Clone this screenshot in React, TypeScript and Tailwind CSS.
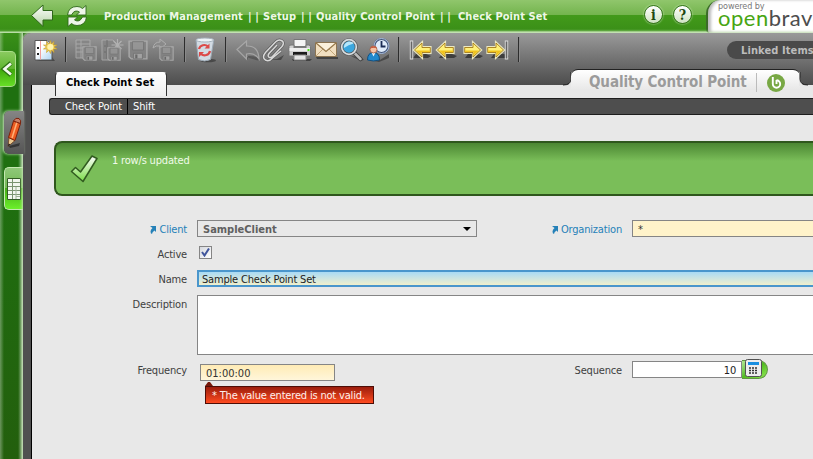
import type { ReactNode } from 'react';
import clsx from 'clsx';

function Icon({ children, dim = false }: { children: ReactNode; dim?: boolean }) {
  return (
    <svg width="26" height="26" viewBox="0 0 26 26" fill="none" className={clsx('shrink-0', dim && 'opacity-80')}>
      {children}
    </svg>
  );
}

function Separator({ className = '' }: { className?: string }) {
  return (
    <div className={clsx('w-4 shrink-0 pl-[7px]', className)}>
      <div className="h-[25px] w-[2px] border-l border-r border-l-[#2d2d2d] border-r-[#8a8a8a]" />
    </div>
  );
}

function Floppy({ x = 0, y = 0, size = 18 }: { x?: number; y?: number; size?: number }) {
  return (
    <svg x={x} y={y} width={size} height={size} viewBox="0 0 18 18">
      <path d="M1 1h16v16H3l-2-2z" fill="#858585" stroke="#b4b4b4" strokeWidth="1.300" />
      <path d="M4 1.500h10v7.500H4z" fill="#999" stroke="#6f6f6f" strokeWidth=".7" />
      <path d="M5 12h8v5H5z" fill="#adadad" stroke="#6f6f6f" strokeWidth=".7" />
      <path d="M6.500 13h2v3.500h-2z" fill="#666" />
    </svg>
  );
}

function NewIcon() {
  return (
    <Icon>
      <path d="M4 24h19l-3-4z" fill="#222" opacity=".5" />
      <path d="M3 3.500h12l5 5V23H3z" fill="url(#page)" stroke="#555" />
      <path d="M8.500 4v18.500" stroke="#f0a0a0" />
      <path d="M15 3.500V8h4" fill="#d7dce4" stroke="#666" strokeWidth=".8" />
      <path d="M5 10h2v2H5zM5 16h2v2H5z" fill="#222" />
      <path
        d="M18.500 3.500l1 3.500 2.500-2.500-.5 3.500 3.500 0-3 2 3 2-3.500 0 .5 3.500-2.500-2.500-1 3.500-1.500-3.300-2.500 2.300.5-3.500-3.500 0 3-2-3-2 3.500 0-.5-3.500 2.500 2.500z"
        fill="#f3d35c"
        stroke="#c79b25"
        strokeWidth=".6"
      />
      <circle cx="18.300" cy="10" r="3" fill="#fff3b0" />
      <defs>
        <linearGradient id="page" x1="0" y1="0" x2="1" y2="1">
          <stop offset=".4" stopColor="#fff" />
          <stop offset="1" stopColor="#a8d2f4" />
        </linearGradient>
      </defs>
    </Icon>
  );
}

function RecycleBinIcon() {
  return (
    <Icon>
      <ellipse cx="15" cy="23.500" rx="8" ry="1.800" fill="#222" opacity=".5" />
      <path d="M3 3l2.500 19.500Q11.500 25.500 17.500 22.500L20.800 3z" fill="#d2dbe3" stroke="#9aa7b3" />
      <ellipse cx="11.900" cy="3" rx="8.900" ry="2" fill="#eef3f7" stroke="#a5b1bb" />
      <path d="M6 12a5.500 5.500 0 0 1 9-2.500M17 14a5.500 5.500 0 0 1-9 3" stroke="#dc4a48" strokeWidth="2.200" />
      <path d="M16.500 6.500v5h-5zM6 20v-5h5z" fill="#dc4a48" />
    </Icon>
  );
}

function UndoIcon() {
  return (
    <Icon dim>
      <path d="M6 16l7 7v-4q8-.5 11 3l-1 1.500-9-2.500z" fill="#3c3c3c" opacity=".6" />
      <path d="M2 12.500l9.500-8.500v5q12-.5 12.500 13-4-6.500-12.500-5v5z" fill="#7f7f7f" stroke="#b0b0b0" strokeWidth="1.200" />
    </Icon>
  );
}

function ClipIcon() {
  return (
    <Icon>
      <path d="M7 23l9-1 7-4-3 5z" fill="#222" opacity=".5" />
      <path
        d="M16 8l-8 8.500q-2 3 .5 4 2 .5 3.500-1.500l9-9.500q3-4-.5-6-3-1.500-6 1.500l-10 10.500q-4 5 0 7.500 3.500 2 7-2L20 14"
        stroke="#5c5c5c"
        strokeWidth="2.800"
      />
      <path
        d="M16 8l-8 8.500q-2 3 .5 4 2 .5 3.500-1.500l9-9.500q3-4-.5-6-3-1.500-6 1.500l-10 10.500q-4 5 0 7.500 3.500 2 7-2L20 14"
        stroke="#d8d8d8"
        strokeWidth="1.500"
      />
    </Icon>
  );
}

function PrinterIcon() {
  return (
    <Icon>
      <path d="M5 22h20l-2 2H6z" fill="#222" opacity=".6" />
      <path d="M7 2.500h12v7H7z" fill="#f4f4f4" stroke="#777" />
      <path d="M2 9.500Q2 8 4 8h3v3h12V8h2.500q2 0 2 1.500V19H2z" fill="#cfcfcf" stroke="#777" />
      <path d="M2.500 11H23v3H2.500z" fill="#ededed" />
      <path d="M6 15h14v3H6z" fill="#1b1b1b" />
      <path d="M7 18h12v5H7z" fill="#e4e4e4" stroke="#888" />
      <path d="M20.500 12h2v2h-2z" fill="#4fe01c" />
    </Icon>
  );
}

function MailIcon() {
  return (
    <Icon>
      <path d="M3 20h22v2H4z" fill="#222" opacity=".6" />
      <path d="M2.500 5.500h21v14h-21z" fill="#f1dfc0" stroke="#8b7452" />
      <path d="M3 19l7.500-7.500M23 19l-7.500-7.500" stroke="#c1a67a" />
      <path d="M3 6l10 8.500L23 6" fill="#fbf1dc" stroke="#96784a" strokeWidth="1.200" />
    </Icon>
  );
}

function SearchIcon() {
  return (
    <Icon>
      <path d="M12 19q8 5 13 4l-3-3z" fill="#222" opacity=".5" />
      <path d="M15 15.500l6.500 6.500" stroke="#444" strokeWidth="4.500" strokeLinecap="round" />
      <path d="M15.500 16l6 6" stroke="#b8b8b8" strokeWidth="2.500" strokeLinecap="round" />
      <circle cx="10" cy="10" r="7.300" fill="#3ba7df" stroke="#555" strokeWidth="3" />
      <circle cx="10" cy="10" r="7.300" stroke="#d7dde0" strokeWidth="1.700" />
      <path d="M5 9q1-4 5-4.500 4 0 4.500 2-5 1-9.500 4.500z" fill="#b6e6fa" />
    </Icon>
  );
}

function UserClockIcon() {
  return (
    <Icon>
      <path d="M5 23h10l9-6v4l-10 4z" fill="#222" opacity=".5" />
      <circle cx="16.500" cy="9" r="7" fill="#e0ecfa" stroke="#44577b" strokeWidth="2" />
      <circle cx="16.500" cy="9" r="7.500" stroke="#b9cbe5" strokeWidth=".9" />
      <path d="M16.500 4v5.500h4" stroke="#1b2c55" strokeWidth="1.800" />
      <path d="M2.500 23q0-7.500 6-7.500t6 7.500q-6 2-12 0z" fill="#2188cc" stroke="#14507f" />
      <path d="M6.500 15.500h4l-2 4z" fill="#e8f4fc" />
      <circle cx="8.500" cy="12.500" r="3.500" fill="#f5c2a4" stroke="#a3583c" strokeWidth=".8" />
      <path d="M5 11.500q3.500-4.500 7 0-3-1.500-7 0z" fill="#c4553a" />
    </Icon>
  );
}

function ArrowIcon({ flip = false, bar = false }: { flip?: boolean; bar?: boolean }) {
  return (
    <Icon>
      <path d="M6 21h15l3-2-5-2H9z" fill="#1f1f1f" opacity=".65" />
      <g transform={flip ? 'translate(26 0) scale(-1 1)' : undefined}>
        {bar && <path d="M4.500 3.500v19" stroke="#dcdcdc" strokeWidth="3.400" />}
        {bar && <path d="M4.500 4.500v17" stroke="#656565" strokeWidth="1.600" />}
        <g transform={bar ? 'translate(3 0)' : undefined}>
          <path d="M4 13l8-7.500V10h8.500v6H12v4.500z" fill="#fff6a8" stroke="#ece9c2" strokeWidth="2.200" />
          <path d="M4.500 13L12 6v4.500h8.300v5H12V20z" fill="#fff17a" stroke="#a57916" strokeWidth=".9" />
          <path d="M6 13.500h14v1.500h-8.500v3.500z" fill="#f2c31c" />
        </g>
      </g>
    </Icon>
  );
}

function Toolbar() {
  return (
    <div className="flex h-9 pt-[4px] pl-[9px]">
      <NewIcon />
      <Separator className="-mr-px" />
      <Icon dim>
        <path d="M3 3h14v18H3zM3 7h14M3 11h14M3 15h14M8 3v18" fill="#858585" stroke="#b0b0b0" />
        <Floppy x={9} y={9} size={15} />
      </Icon>
      <Icon dim>
        <path d="M3 3h11l4 4v16H3z" fill="#858585" stroke="#b0b0b0" />
        <path d="M8 3v19M5 9h2M5 15h2" stroke="#666" />
        <path d="M18.500 2v12M12.500 8h12M14.500 4l8 8M22.500 4l-8 8" stroke="#bbb" strokeWidth="1.200" />
        <Floppy x={8} y={10} size={14} />
      </Icon>
      <Icon dim>
        <Floppy x={3} y={3} size={20} />
      </Icon>
      <Icon dim>
        <path d="M2 11q1-6 7-6V2l6 5-6 5V9q-4-1-7 2z" fill="#8b8b8b" stroke="#b8b8b8" />
        <Floppy x={8} y={9} size={15} />
      </Icon>
      <Separator />
      <RecycleBinIcon />
      <Separator className="-ml-px -mr-px" />
      <div className="w-[2px]" />
      <UndoIcon />
      <ClipIcon />
      <PrinterIcon />
      <MailIcon />
      <SearchIcon />
      <UserClockIcon />
      <Separator />
      <ArrowIcon bar />
      <ArrowIcon />
      <ArrowIcon flip />
      <ArrowIcon flip bar />
      <Separator />
      <div className="mt-[4px] ml-auto h-[18px] w-[86px] rounded-l-full bg-[#4a4a4a] pl-[14px] text-[11px] leading-[20px] font-bold tracking-[0.1px] whitespace-nowrap text-[#bcbcbc]">
        Linked Items
      </div>
    </div>
  );
}

function RoundBadge({ label }: { label: string }) {
  return (
    <div className="flex size-[19px] items-center justify-center rounded-full border border-[#35751b] bg-linear-to-b from-white to-[#cfe3c3] font-['DejaVu_Serif'] text-[14px] leading-none font-bold text-[#20480f] shadow-[0_0_2px_#d9f0cb]">
      {label}
    </div>
  );
}

function Header() {
  return (
    <header className="flex h-[33px] shrink-0 items-center bg-[linear-gradient(#90c66c_0px,#73b44d_15px,#429a1a_15px,#3b9018_29px,#51a02f_31px,#b9dda6_32px)]">
      <svg width="24" height="24" viewBox="0 0 24 24" className="ml-[30px] shrink-0 -translate-y-px">
        <path d="M1.500 11.500L13 1v5.500h9.500V16H13v6.500z" fill="url(#silver)" stroke="#2e661a" />
        <defs>
          <linearGradient id="silver" x2="0" y2="1">
            <stop stopColor="#fff" />
            <stop offset="1" stopColor="#b5d3a5" />
          </linearGradient>
        </defs>
      </svg>
      <svg width="22" height="22" viewBox="0 0 22 22" fill="none" className="ml-3 shrink-0 -translate-y-px">
        <path
          d="M1.500 10Q2.500 1.500 11 1.500q3.500 0 5.500 2l3.500-3V10h-9.500l3-3q-5-3-8 3zM20.500 12q-1 8.500-9.500 8.500-3.500 0-5.500-2L2 21.500V12h9.500l-3 3q5 3 8-3z"
          fill="#eef6e9"
          stroke="#2e661a"
          strokeWidth=".9"
        />
      </svg>
      <nav className="ml-4 flex pt-[2px] text-[11px] font-bold tracking-[0.08px] whitespace-pre text-[#eef7e6]">
        <span className="w-[144px]">Production Management</span>
        <span className="w-[15px]">| |</span>
        <span className="w-[38px]">Setup</span>
        <span className="w-[15px]">| |</span>
        <span className="w-[124px]">Quality Control Point</span>
        <span className="w-[18px]">| |</span>
        <span>Check Point Set</span>
      </nav>
      <div className="ml-auto flex gap-[10px] pb-[4px]">
        <RoundBadge label="i" />
        <RoundBadge label="?" />
      </div>
      <div className="ml-[14px] h-[33px] w-[107px] shrink-0 overflow-hidden rounded-bl-[4px] rounded-tl-[14px] border-l-2 border-[#3c6b28] bg-white pl-[10px] whitespace-nowrap shadow-[inset_3px_0_3px_#bbb]">
        <p className="h-[11px] text-[9px] leading-[13px] tracking-[-0.1px] text-[#777]">powered by</p>
        <p className="-mt-[2px] font-['Lato'] text-[22px] leading-[18px] tracking-[0.5px] text-[#4d4d4d]">
          <span className="text-[#48a512]">open</span>bravo
        </p>
      </div>
    </header>
  );
}

function SideNav() {
  return (
    <aside className="w-[23px] shrink-0 bg-[linear-gradient(90deg,#ffffff55_0px,transparent_4px,transparent_18px,#ffffff55_21px,#ffffffaa_23px),linear-gradient(#3a9018,#1f7010_50px,#1f7010_150px,#235f0d)]">
      <div className="mt-[18px] flex h-[36px] w-4 items-center rounded-r-[5px] border border-l-0 border-[#a9dd88] bg-[linear-gradient(#8aca60,#5db52d_50%,#3fa60b_50%,#67df27)]">
        <svg width="14" height="16" viewBox="0 0 14 16" fill="none">
          <path d="M11 2L4 8l7 6" stroke="#2d7113" strokeWidth="4.500" />
          <path d="M11 2.500L4.500 8l6.500 5.500" stroke="#f3faee" strokeWidth="2.700" />
        </svg>
      </div>
      <div className="relative mt-[24px] ml-[4px] flex h-[43px] w-[20px] items-center rounded-l-[5px] bg-linear-to-b from-[#858585] to-[#555] shadow-[-1px_0_3px_#d8edcc]">
        <svg width="18" height="34" viewBox="0 0 18 34">
          <path d="M5 30l11-3-1 3-9 2z" fill="#222" opacity=".7" />
          <path d="M4 30.500l1-9 6 3z" fill="#edc990" stroke="#6d4322" strokeWidth=".8" />
          <path d="M4 30.500l.5-3 2 1z" fill="#222" />
          <path d="M4.500 21.500L9.500 5l7 2.500-5.500 17z" fill="#ed5c22" stroke="#7b210a" />
          <path d="M8 22l5-16" stroke="#ffb076" strokeWidth="1.500" />
          <path d="M9.500 5q2-4 5.500-2.500 2.500 2 1.500 5z" fill="#c87e66" stroke="#7b210a" />
        </svg>
      </div>
      <div className="mt-[13px] ml-[4px] flex h-[43px] items-center rounded-l-[5px] border border-r-0 border-[#c5e8b2] bg-[linear-gradient(#8fc879,#72b753_50%,#45ab16_50%,#6cf02b)] pl-[2px]">
        <svg width="14" height="22" viewBox="0 0 14 22">
          <path d="M.5.500h13v21H.5z" fill="#f3f7ef" stroke="#325c24" />
          <path d="M1 4.500h12M1 8.500h12M1 12.500h12M1 16.500h12M5.500 1v20" stroke="#7b9470" />
          <path d="M9 9v12M9 18.500h4" stroke="#9fb396" />
        </svg>
      </div>
    </aside>
  );
}

function PageTabs() {
  return (
    <div className="relative z-10 flex">
      <div className="mt-[3px] ml-[32px] h-[24px] w-[112px] rounded-t-[4px] border-x border-t border-[#333] border-t-white bg-linear-to-b from-white to-[#ededed] pl-[10px] text-[11px] leading-[20px] font-bold whitespace-nowrap text-black">
        Check Point Set
      </div>
      <div className="ml-[396px] flex">
        <svg width="9" height="17" viewBox="0 0 9 17" fill="none" className="-mr-px">
          <path d="M0 17Q8 17 8 8V3h1v14z" fill="#e8e8e8" />
          <path d="M0 16Q8 16 8 10V3" stroke="#222" />
        </svg>
        <div className="flex h-[29px] w-[229px] items-center rounded-t-[7px] border-t border-[#222] bg-linear-to-b from-white to-[#e8e8e8] to-70% pb-[3px] pl-[18px]">
          <h1 className="w-[167px] text-[15px] font-bold tracking-[-0.1px] whitespace-nowrap text-[#9b9b9b]">Quality Control Point</h1>
          <div className="h-[19px] w-px bg-[#bbb]" />
          <svg width="18" height="18" viewBox="0 0 18 18" fill="none" className="ml-[10px]">
            <circle cx="9" cy="9" r="9" fill="#78a844" />
            <path d="M5.800 3v7a3.700 3.700 0 1 0 3.700-3.700M9.500 6v4" stroke="#fff" strokeWidth="1.900" />
          </svg>
        </div>
        <svg width="9" height="17" viewBox="0 0 9 17" fill="none" className="-ml-px">
          <path d="M9 17Q1 17 1 8V3H0v14z" fill="#e8e8e8" />
          <path d="M9 16Q1 16 1 10V3" stroke="#222" />
        </svg>
      </div>
    </div>
  );
}

function Label({ children, link = false, className = 'w-[155px]' }: { children: ReactNode; link?: boolean; className?: string }) {
  return (
    <div
      className={clsx(
        'flex h-[17px] shrink-0 items-center justify-end gap-[3px] pt-[2px] leading-[17px]',
        link ? 'text-[#2581b8]' : 'text-[#404040]',
        className,
      )}
    >
      {link && (
        <svg width="6" height="8" viewBox="0 0 6 8">
          <path d="M0 0h6v6L4.500 4.500Q2 6 2 8 .5 7.500.5 5.500T2.500 2z" fill="#2581b8" />
        </svg>
      )}
      <span>{children}</span>
    </div>
  );
}

function CheckPointForm() {
  return (
    <form className="mt-6 text-[11px] leading-[17px]">
      <div className="flex">
        <Label link>Client</Label>
        <div className="ml-[10px] flex h-[17px] w-[280px] shrink-0 items-center border border-[#858585] pt-px pr-[5px] pl-[5px] font-bold tracking-normal text-[#606060]">
          <span>SampleClient</span>
          <div className="ml-auto h-0 w-0 border-x-4 border-t-4 border-x-transparent border-t-black" />
        </div>
        <Label link className="w-[145px]">
          Organization
        </Label>
        <div className="ml-[10px] h-[17px] w-[190px] shrink-0 border border-[#858585] bg-[#fff3ca] pl-[5px] text-[#333]">*</div>
      </div>
      <div className="mt-2 flex h-[17px]">
        <Label>Active</Label>
        <div className="mt-px ml-[12px] flex size-[13px] items-center justify-center border border-[#858585] bg-linear-to-br from-[#d5d8de] to-white">
          <svg width="9" height="9" viewBox="0 0 9 9" fill="none">
            <path d="M1 4l2.500 3.500L8 .5" stroke="#40559c" strokeWidth="2" />
          </svg>
        </div>
      </div>
      <div className="mt-2 flex">
        <Label>Name</Label>
        <div className="ml-[10px] h-[17px] w-[630px] shrink-0 border-2 border-[#4a96cc] bg-linear-to-b from-[#a9daf4] to-[#f0efcc] pl-[3px] leading-[15px] text-[#222]">
          Sample Check Point Set
        </div>
      </div>
      <div className="mt-2 flex">
        <Label>Description</Label>
        <div className="ml-[10px] h-[60px] w-[630px] shrink-0 border border-[#858585] bg-white" />
      </div>
      <div className="mt-[6px] flex">
        <Label>Frequency</Label>
        <div className="mt-[3px] ml-[13px] w-[174px]">
          <div className="h-[17px] w-[135px] border border-[#858585] bg-linear-to-b from-[#ffebb5] to-[#fff6da] pl-[5px] leading-[17px] tracking-normal text-[#333]">
            01:00:00
          </div>
          <svg width="8" height="5" viewBox="0 0 8 5" className="ml-[5px]">
            <path d="M0 5l3-4h2l3 4z" fill="#76180a" />
          </svg>
          <div className="ml-[5px] h-[18px] w-[169px] border border-[#4d0d06] bg-linear-to-b from-[#9c1d0c] to-[#ff4b20] pl-[6px] leading-[17px] whitespace-nowrap text-[#fff0ec]">
            * The value entered is not valid.
          </div>
        </div>
        <Label className="w-[248px]">Sequence</Label>
        <div className="ml-[10px] h-[17px] w-[110px] border border-[#858585] bg-white pr-[5px] text-right leading-[17px] text-[#222]">10</div>
        <div className="-mt-px h-[19px] w-[26px] rounded-r-full border border-l-0 border-[#5f9741] bg-linear-to-br from-[#b3e891] via-[#52bb20] to-[#91ed54] pl-[3px]">
          <svg width="17" height="18" viewBox="0 0 17 18" className="-mt-[2px] overflow-visible">
            <rect x=".5" y=".5" width="16" height="17" rx="2" fill="#ededed" stroke="#525252" />
            <path d="M3 3h11v3H3z" fill="#188ee0" />
            <path d="M4 9h9M4 11.500h9M4 14h9" stroke="#333" strokeWidth="1.300" strokeDasharray="2 1" />
          </svg>
        </div>
      </div>
    </form>
  );
}

export default function App() {
  return (
    <div className="flex h-[459px] w-[813px] flex-col overflow-hidden bg-[#286e13] font-['DejaVu_Sans_Condensed','DejaVu_Sans',sans-serif] text-[11px] [font-stretch:condensed]">
      <Header />
      <div className="flex min-h-0 flex-1">
        <SideNav />
        <main className="flex w-[790px] flex-col rounded-tl-[8px] bg-[#505050] shadow-[0_0_3px_1px_#c6e3b5]">
          <div className="h-[52px] shrink-0 rounded-tl-[8px] bg-linear-to-b from-[#9a9a9a] to-[#4d4d4d]">
            <Toolbar />
            <PageTabs />
          </div>
          <div className="ml-2 flex-1 border-l border-black bg-[#e8e8e8] pt-[13px] tracking-[-0.18px]">
            <div className="ml-[17px] flex h-[17px] rounded-l-[3px] border border-r-0 border-[#1d1d1d] bg-[#4e4e4e] pl-[15px] leading-[16px] tracking-[-0.1px] text-white">
              <span className="w-[63px] border-r border-black">Check Point</span>
              <span className="pl-[5px]">Shift</span>
            </div>
            <div className="mt-[26px] ml-[22px] flex h-[55px] rounded-l-[8px] border-2 border-r-0 border-[#2f571d] bg-[linear-gradient(#4b8632,#7abe59_18px)]">
              <svg width="28" height="28" viewBox="0 0 28 28" className="mt-[12px] ml-[14px]">
                <path d="M1.500 16.500l4-4 5 4.500L22 1l5 2.500-14 23z" fill="url(#tick)" stroke="#315b20" strokeWidth="1.500" strokeLinejoin="round" />
                <defs>
                  <linearGradient id="tick" x2="0" y2="1">
                    <stop stopColor="#fff" />
                    <stop offset="1" stopColor="#79dc45" />
                  </linearGradient>
                </defs>
              </svg>
              <p className="mt-[9px] ml-[14px] leading-[17px] text-[#f1faea]">1 row/s updated</p>
            </div>
            <CheckPointForm />
          </div>
        </main>
      </div>
    </div>
  );
}
